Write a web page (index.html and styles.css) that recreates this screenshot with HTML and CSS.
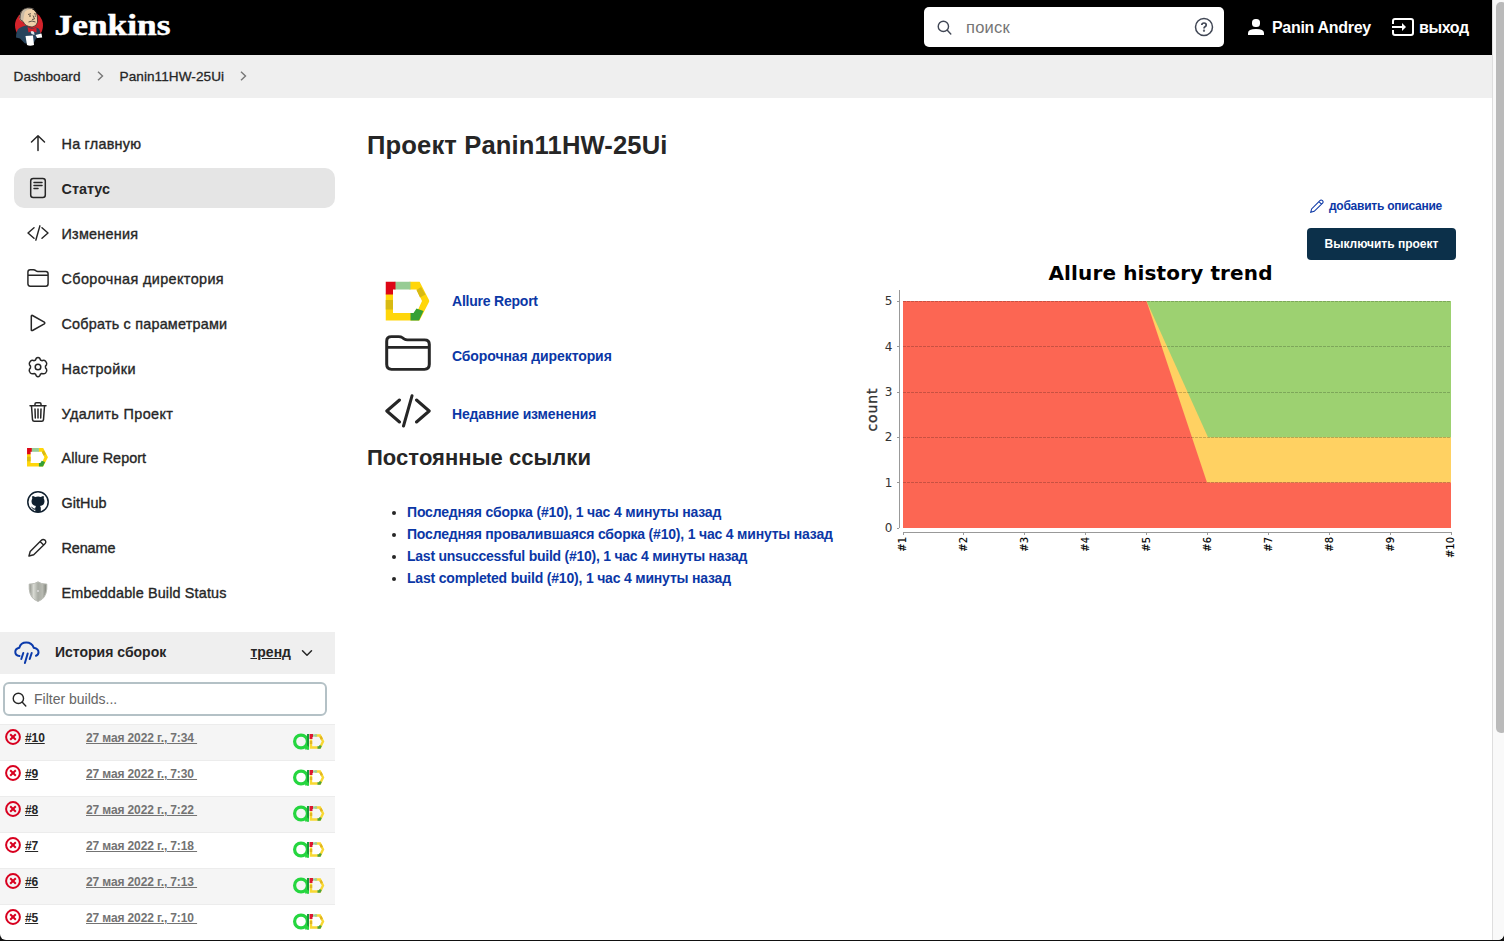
FILE: index.html
```
<!DOCTYPE html>
<html lang="ru">
<head>
<meta charset="utf-8">
<title>Panin11HW-25Ui [Jenkins]</title>
<link rel="stylesheet" href="styles.css">
</head>
<body>
<svg class="defs" width="0" height="0">
  <defs>
    <linearGradient id="shieldfill" x1="0" x2="1"><stop offset="0" stop-color="#8d9088"/><stop offset=".25" stop-color="#d8dad3"/><stop offset=".5" stop-color="#a9aca4"/><stop offset=".75" stop-color="#b8bab2"/><stop offset="1" stop-color="#7c7f77"/></linearGradient>
    <symbol id="i-search" viewBox="0 0 16 16"><path d="M11 11l3.7 3.9" /><circle cx="6.8" cy="6.8" r="5.5"/></symbol>
    <symbol id="i-folder" viewBox="0 0 46 38"><path d="M1.7 31V6.5Q1.7 1.7 6.500 1.7h7q2.500 0 4 1.200l1.500 1.200q1.500 1 3.500 1h17q4.800 0 4.800 4.800V31q0 5.300-4.800 5.300h-33Q1.700 36.300 1.700 31zM1.700 13h42.600"/></symbol>
    <symbol id="i-code" viewBox="0 0 46 34"><path d="M14.500 6L1.800 17l12.700 11M31.500 6l12.700 11-12.700 11M27 1.800L18.500 32"/></symbol>
    <symbol id="i-pencil" viewBox="0 0 20 20"><path d="M1 19l1.300-4.800L13.800 2.600q2-2 4-.4 2 2-.2 4.100L6 17.600zM12.700 3.800l3.700 3.600"/></symbol>
    <symbol id="i-allure" viewBox="0 0 44 40"><path fill="#ffd60a" d="M24 0h10l10 19.500L34 39H0V12h7.500v19.500H31l5.500-12L31 8h-7z"/><path fill="#97cc94" d="M9 0h16v8H9z"/><path fill="#dd0716" d="M0 0h10v8H7.500v5H0z"/><path fill="#d8ba13" d="M0 18.500h7.500V28H0zM31 8.500l4.500-3 4.500 7.500-5.500 3z"/><path fill="#35a035" d="M25 31.500h3l3-4.500 7 2.500-4.500 9.500H25z"/></symbol>
    <symbol id="i-fail" viewBox="0 0 16 16"><circle cx="8" cy="8" r="6.900"/><path d="M5.200 5.200l5.600 5.600M10.800 5.200l-5.600 5.600"/></symbol>
    <symbol id="i-report" viewBox="0 0 32 17"><circle cx="8" cy="8.500" r="6.400" fill="none" stroke="#25d63f" stroke-width="3.200"/><path fill="#159b39" d="M14 1h2v15.500h-2z"/><path fill="#25d63f" d="M12.500 11l3.500 3v2.500h-4z"/><g fill="none" stroke-width="2.400"><path stroke="#f8d832" d="M22 2.500h5l3 6-3 6h-9v-8"/><path stroke="#9ccf9b" d="M20 2.500h4"/><path stroke="#dd1730" stroke-width="3" d="M16.500 2.500h3.500M18 3v3"/><path stroke="#e2b520" d="M18 8v3M27.500 3.500l1.300 2.700"/><path stroke="#48a33d" d="M24.500 14.500h2.200l1-2"/></g></symbol>
  </defs>
</svg>
<div class="window">
<div class="page">
  <header class="header">
    <a class="brand">
      <svg width="30" height="40" viewBox="0 0 30 40" aria-hidden="true">
        <ellipse cx="15" cy="18.500" rx="14" ry="14.500" fill="#d3232b"/>
        <path fill="#28445c" d="M5.500 21q3-2 6.500-2.500l6 3 4-1q3.500.5 4 4l1.500 5-5.500 2-2 4-9 1-5-5-4-1q0-7.500 3.500-9.500z"/>
        <path fill="#efd1aa" d="M6.500 8Q7 1.500 14 1.200q8 .3 9.200 8l.3 6q-1 4-5.500 4.700-7-.5-9-5.500Q5.500 13.500 5.500 11.500z"/>
        <path fill="#c9bba5" d="M5.700 12Q5 3 12 1q5-1 8 1-7.500-.500-9.500 3.500L9.500 12l-1 3z"/>
        <path fill="none" stroke="#231f20" stroke-width=".7" d="M6 11Q6 2 13.500.900 23 .8 23.300 9l.3 6q-1 4.500-5.500 5-7-.5-9-5.500-3.500-1.500-3.500-4M14 7.500l3-.800M20 6.700l2 .5M19 8.500l1.500 3.500-2.500.5M14.500 15q3.500-2 7 0"/>
        <circle cx="16" cy="9" r=".7"/><circle cx="21.300" cy="9" r=".6"/>
        <path fill="#dfe5ea" d="M16 23l4 1.500.500 3.500-3-1z"/>
        <path fill="#fff" d="M11.500 29l7.500-.5 1 9.500q-4 1.500-7 0zM21.500 28l6-1.500.7 4-5 .5z"/>
        <path fill="#d3202b" d="M13.500 20l4.500 2 4.500-1.500v5l-4.500-1.500-3.500 1.500z"/>
      </svg>
      <svg class="wordmark" width="118" height="32" viewBox="0 0 118 32"><text x=".5" y="24" textLength="116" lengthAdjust="spacingAndGlyphs">Jenkins</text></svg>
    </a>
    <div class="search">
      <svg class="line" width="15" height="15"><use href="#i-search"/></svg>
      <span class="search-text">поиск</span>
      <svg width="20" height="20" viewBox="0 0 20 20" fill="none" stroke="#414755" stroke-width="1.500"><circle cx="10" cy="10" r="8.500"/><path stroke-width="1.700" d="M7.800 8q.1-2 2.200-2 2.200 0 2.200 1.900 0 1.100-1.200 1.800-1 .6-1 1.700"/><circle cx="10" cy="13.700" r=".4"/></svg>
    </div>
    <a class="user"><svg width="16" height="16" viewBox="0 0 16 16" fill="#fff"><rect x="4" y="0" width="8" height="8" rx="3.500"/><path d="M0 16v-2q0-4 8-4t8 4v2z"/></svg><span>Panin Andrey</span></a>
    <a class="logout"><svg width="22" height="18" viewBox="0 0 22 18" fill="none" stroke="#fff" stroke-width="2"><path d="M1 6V3q0-2 2-2h16q2 0 2 2v12q0 2-2 2H3q-2 0-2-2v-3M0 9h12"/><path d="M10 5l4 4-4 4z" fill="#fff" stroke="none"/></svg><span>выход</span></a>
  </header>
  <nav class="crumbs">
    <span class="crumb">Dashboard</span>
    <svg width="7" height="10" viewBox="0 0 7 10"><path d="M1 .800L5.500 5 1 9.200"/></svg>
    <span class="crumb">Panin11HW-25Ui</span>
    <svg width="7" height="10" viewBox="0 0 7 10"><path d="M1 .800L5.500 5 1 9.200"/></svg>
  </nav>
  <div class="columns">
    <aside class="side">
      <div class="tasks">
        <a class="task"><svg class="line" width="24" height="24" viewBox="0 0 24 24"><path d="M12 19.500V5M5.500 11L12 4.800l6.500 6.200"/></svg><span class="t1">На главную</span></a>
        <a class="task active"><svg class="line" width="24" height="24" viewBox="0 0 24 24"><rect x="4.700" y="2.500" width="14.600" height="19" rx="2.500"/><path d="M8 6.500h8M8 9.500h8M8 12.500h4"/></svg><span class="t2">Статус</span></a>
        <a class="task"><svg class="line thick" width="22" height="16"><use href="#i-code"/></svg><span class="t3">Изменения</span></a>
        <a class="task"><svg class="line thick" width="22" height="18"><use href="#i-folder"/></svg><span class="t4">Сборочная директория</span></a>
        <a class="task"><svg class="line" width="24" height="24" viewBox="0 0 24 24"><path d="M5.300 19V5q.2-1 1.200-.5l11.800 6.700q1 .8 0 1.600L6.500 19.500q-1 .4-1.200-.5z"/></svg><span class="t5">Собрать с параметрами</span></a>
        <a class="task"><svg class="line" width="24" height="24" viewBox="0 0 24 24"><path d="M12 2.500q2 0 2.400 2.500l1.400.7q2.300-1 3.800.5 1.800 2 .9 3.700-1.400 1.200-1 2.100-.4 1 1 2.100 1 2-.9 3.900-1.500 1.400-3.800.5l-1.400.7Q14 21.700 12 21.700T9.600 19.200l-1.400-.7q-2.300.9-3.800-.5-1.900-1.900-.9-3.900 1.400-1.100 1-2.100.4-.9-1-2.100-.9-1.700.9-3.700 1.500-1.500 3.800-.5l1.400-.7Q10 2.500 12 2.500z"/><circle cx="12" cy="12" r="2.800"/></svg><span class="t6">Настройки</span></a>
        <a class="task"><svg class="line" width="24" height="24" viewBox="0 0 24 24"><path d="M4 5.700h16M9 5.500V4q0-1.300 1.300-1.300h3.400Q15 2.700 15 4v1.500M5.500 6l1 13.700q.2 1.600 1.700 1.600h7.600q1.500 0 1.700-1.600l1-13.700M9 9l.3 9M12 9v9M15 9l-.3 9"/></svg><span class="t7">Удалить Проект</span></a>
        <a class="task"><svg width="21" height="19"><use href="#i-allure"/></svg><span class="t8">Allure Report</span></a>
        <a class="task"><svg width="24" height="24" viewBox="0 0 24 24"><circle cx="12" cy="12" r="10.200" fill="#fff" stroke="#10202f" stroke-width="1.500"/><path fill="#10202f" d="M6.400 6q1.500 0 2.700.900 3-.6 5.800 0Q16.200 6 17.600 6q.5 1.300.1 2.500.9 1.200.8 3-.2 4-4.500 4.500.8.8.8 2v4H9.300v-2.500q-2.300.6-3.200-1.500l-1.300-1.200q1.200-.2 2 1 .9 1 2.500.5 0-1.500.7-2.300-4.400-.6-4.500-4.500 0-1.700.8-3Q5.900 7.300 6.400 6z"/></svg><span class="t9">GitHub</span></a>
        <a class="task"><svg class="line" width="19" height="19"><use href="#i-pencil"/></svg><span class="t10">Rename</span></a>
        <a class="task"><svg width="20" height="21" viewBox="0 0 20 21"><path fill="url(#shieldfill)" stroke="#b9bbb4" d="M10 .8q3 2.300 8.800 2.300Q19.500 14 14 18.300L10 20.500l-4-2.200Q.5 14 1.200 3.100 7 3.100 10 .8z"/><circle cx="10" cy="10" r="1" fill="#ddd"/></svg><span class="t11">Embeddable Build Status</span></a>
      </div>
      <section class="builds">
        <div class="builds-head">
          <svg width="26" height="24" viewBox="0 0 26 24" fill="none" stroke="#0b3aab" stroke-width="2" stroke-linecap="round"><path d="M5.500 15Q1.300 14.500 1.300 11q0-3.500 4-4.300Q6.800 1.500 12.300 1.500q5.500 0 7.500 5.300 4.700 1 4.700 4.500 0 2.500-2.500 3.500"/><path d="M9.300 12l-2 6M13.700 12.500l-2.800 9.500M17.700 12l-2 6"/></svg>
          <b class="builds-title">История сборок</b>
          <a class="trend">тренд</a>
          <svg class="line chev" width="12" height="8" viewBox="0 0 12 8"><path d="M1.500 1.800l4.500 4.500 4.500-4.500"/></svg>
        </div>
        <div class="filter"><svg class="line" width="15" height="15"><use href="#i-search"/></svg><span>Filter builds...</span></div>
        <div class="rows">
          <div class="row"><svg class="fail"><use href="#i-fail"/></svg><a class="num">#10</a><a class="date">27 мая 2022 г., 7:34&nbsp;</a><svg class="rep"><use href="#i-report"/></svg></div>
          <div class="row"><svg class="fail"><use href="#i-fail"/></svg><a class="num">#9</a><a class="date">27 мая 2022 г., 7:30&nbsp;</a><svg class="rep"><use href="#i-report"/></svg></div>
          <div class="row"><svg class="fail"><use href="#i-fail"/></svg><a class="num">#8</a><a class="date">27 мая 2022 г., 7:22&nbsp;</a><svg class="rep"><use href="#i-report"/></svg></div>
          <div class="row"><svg class="fail"><use href="#i-fail"/></svg><a class="num">#7</a><a class="date">27 мая 2022 г., 7:18&nbsp;</a><svg class="rep"><use href="#i-report"/></svg></div>
          <div class="row"><svg class="fail"><use href="#i-fail"/></svg><a class="num">#6</a><a class="date">27 мая 2022 г., 7:13&nbsp;</a><svg class="rep"><use href="#i-report"/></svg></div>
          <div class="row"><svg class="fail"><use href="#i-fail"/></svg><a class="num">#5</a><a class="date">27 мая 2022 г., 7:10&nbsp;</a><svg class="rep"><use href="#i-report"/></svg></div>
        </div>
      </section>
    </aside>
    <main class="main">
      <div class="content">
        <h1>Проект Panin11HW-25Ui</h1>
        <div class="links">
          <a class="biglink"><svg width="45" height="41" viewBox="0 0 45 41"><use href="#i-allure" x=".5" y=".5" width="44" height="40"/></svg><span class="l1">Allure Report</span></a>
          <a class="biglink folder"><svg class="line big" width="46" height="36" viewBox="0 0 46 38" preserveAspectRatio="none"><use href="#i-folder" width="46" height="38"/></svg><span class="l2">Сборочная директория</span></a>
          <a class="biglink code"><svg class="line big" width="46" height="34"><use href="#i-code"/></svg><span class="l3">Недавние изменения</span></a>
        </div>
        <h2>Постоянные ссылки</h2>
        <ul class="permalinks">
          <li><a class="p1">Последняя сборка (#10), 1 час 4 минуты назад</a></li>
          <li><a class="p2">Последняя провалившаяся сборка (#10), 1 час 4 минуты назад</a></li>
          <li><a class="p3">Last unsuccessful build (#10), 1 час 4 минуты назад</a></li>
          <li><a class="p4">Last completed build (#10), 1 час 4 минуты назад</a></li>
        </ul>
      </div>
      <div class="right">
        <a class="describe"><svg width="14" height="14"><use href="#i-pencil"/></svg><span>добавить описание</span></a>
        <button class="disable" type="button">Выключить проект</button>
        <svg class="chart" width="596" height="310" viewBox="860 260 596 310">
          <text class="ctitle" x="1048.500" y="280" textLength="224">Allure history trend</text>
          <path fill="#fc6653" d="M903 301h548v227H903z"/>
          <path fill="#ffd162" d="M1146.500 301L1207 482.500h244V301z"/>
          <path fill="#9dd171" d="M1146.500 301l61.500 136.300h243V301z"/>
          <path class="grid" d="M903 301.500h548M903 346.500h548M903 392.500h548M903 437.500h548M903 482.500h548"/>
          <path class="axis" d="M899.500 290v238M897 301.500h2M897 346.500h2M897 392.500h2M897 437.500h2M897 482.500h2M897 528.500h2M903 532.500h548M903.500 532v3M963.500 532v3M1024.500 532v3M1085.500 532v3M1146.500 532v3M1207.500 532v3M1268.500 532v3M1329.500 532v3M1390.500 532v3M1451.500 532v3"/>
          <g class="ylab"><text x="892.500" y="305">5</text><text x="892.500" y="351">4</text><text x="892.500" y="396">3</text><text x="892.500" y="441">2</text><text x="892.500" y="487">1</text><text x="892.500" y="532">0</text></g>
          <text class="count" transform="translate(877 431.500) rotate(-90)" textLength="43">count</text>
          <g class="xlab">
            <text transform="translate(906 537) rotate(-90)">#1</text><text transform="translate(967 537) rotate(-90)">#2</text><text transform="translate(1028 537) rotate(-90)">#3</text><text transform="translate(1089 537) rotate(-90)">#4</text><text transform="translate(1150 537) rotate(-90)">#5</text><text transform="translate(1211 537) rotate(-90)">#6</text><text transform="translate(1272 537) rotate(-90)">#7</text><text transform="translate(1333 537) rotate(-90)">#8</text><text transform="translate(1394 537) rotate(-90)">#9</text><text transform="translate(1454 537) rotate(-90)">#10</text>
          </g>
        </svg>
      </div>
    </main>
  </div>
</div>
<div class="scrollbar"><div class="thumb"></div></div>
</div>
</body>
</html>
```
FILE: styles.css
```
* { box-sizing: border-box; }
body { margin: 0; background: #111; color: #262626; font-family: "Liberation Sans", Arial, sans-serif; font-size: 14px; overflow: hidden; }
.defs { display: block; height: 0; }
.window { display: flex; width: 1504px; height: 940px; background: #fff; border-radius: 0 0 6px 6px; overflow: hidden; }
.page { width: 1492px; flex: none; display: flex; flex-direction: column; }
.scrollbar { width: 12px; background: #f9f9f9; border-left: 1px solid #dedede; padding: 2px 0 0 3px; overflow: hidden; }
.thumb { width: 11px; height: 731px; border-radius: 5px; background: #bababa; }
svg { flex: none; display: block; overflow: visible; }
span, a, b, li { white-space: nowrap; }
.line { fill: none; stroke: #262626; stroke-width: 1.5; stroke-linecap: round; stroke-linejoin: round; }
.line.thick { stroke-width: 3.1; }
.line.big { stroke-width: 3; }

.header { height: 55px; flex: none; background: #000; color: #fff; display: flex; align-items: center; padding: 0 0 1px 14px; }
.brand { display: flex; align-items: center; gap: 10px; margin-right: auto; }
.wordmark text { font: bold 30px "Liberation Serif", serif; fill: #fff; stroke: #fff; stroke-width: .5; }
.search { width: 300px; height: 40px; background: #fff; border-radius: 5px; display: flex; align-items: center; padding: 0 10px 0 13px; color: #757575; font-size: 16.5px; margin-right: 24px; }
.search .line { stroke: #414755; }
.search-text { margin: 1px auto 0 14px; letter-spacing: .2px; }
.user, .logout { display: flex; align-items: center; font-size: 16px; font-weight: bold; }
.user { gap: 8px; width: 144px; letter-spacing: -.3px; }
.logout { gap: 5px; width: 100px; letter-spacing: -.4px; }
.user span, .logout span { padding-top: 2px; }

.crumbs { height: 43px; flex: none; background: #efefef; display: flex; align-items: center; gap: 16px; padding: 0 0 1px 13.5px; font-size: 13.6px; -webkit-text-stroke: .3px #262626; }
.crumb { letter-spacing: .06px; }
.crumbs svg { fill: none; stroke: #777; stroke-width: 1.4; }

.columns { display: flex; flex: 1; min-height: 0; }
.side { width: 335px; flex: none; }
.tasks { height: 534px; padding: 25px 0 0 14px; display: flex; flex-direction: column; gap: 4.9px; }
.task { height: 40px; flex: none; border-radius: 10px; display: grid; grid-template-columns: 47.5px 1fr; align-items: center; font-size: 14.4px; -webkit-text-stroke: .35px #262626; }
.task span { padding-top: 2.4px; }
.task svg { justify-self: center; }
.task.active { background: #e5e5e5; font-weight: bold; -webkit-text-stroke: 0; }
.t1, .t3 { letter-spacing: .24px; }
.t4, .t7 { letter-spacing: .39px; }
.t5 { letter-spacing: .21px; }
.t6 { letter-spacing: .43px; }
.t8, .t9 { letter-spacing: .05px; }
.t10 { letter-spacing: -.1px; }
.t11 { letter-spacing: .15px; }

.builds-head { height: 42px; background: #efefef; display: flex; align-items: center; padding: 0 22px 1px 14px; }
.builds-title { font-size: 14px; margin: 0 auto 0 15px; padding-bottom: 1px; }
.trend { font-size: 14px; font-weight: bold; text-decoration: underline; margin-right: 10px; padding-bottom: 1px; }
.filter { margin: 8px 8px 8px 3px; height: 34px; border: 2px solid #b4c1c6; border-radius: 6px; display: flex; align-items: center; gap: 7px; padding-left: 7px; font-size: 14px; color: #666; }
.row { height: 36px; border-top: 1px solid #ececec; display: grid; grid-template-columns: 20px 61px 1fr 32px; padding: 4px 10px 0 5px; font-size: 12px; font-weight: bold; }
.row:nth-child(odd) { background: #f5f5f5; }
.row a { text-decoration: underline; line-height: 18px; justify-self: start; }
.num { letter-spacing: -.1px; }
.fail { width: 16px; height: 16px; fill: none; stroke: #d8001f; stroke-width: 2; }
.date { color: #737373; letter-spacing: -.12px; }
.rep { width: 32px; height: 17px; margin-top: 3.5px; }

.main { flex: 1; display: flex; padding: 0 36px 0 32px; }
.content { width: 493px; flex: none; padding-top: 31px; }
h1 { margin: 0; font-size: 25.6px; line-height: 32px; letter-spacing: .13px; white-space: nowrap; }
.links { padding: 117px 0 0 18px; }
.biglink { display: flex; align-items: center; gap: 21px; height: 46px; color: #0b37a6; font-weight: bold; }
.biglink:first-child { gap: 22px; }
.biglink.folder { height: 58px; }
.biglink.folder span, .biglink.code span { padding-top: 6px; }
.biglink.code { height: 58px; }
.l1 { letter-spacing: -.22px; }
.l2 { letter-spacing: -.1px; }
.l3 { letter-spacing: -.14px; }
h2 { margin: 4px 0 0; font-size: 22px; line-height: 28px; letter-spacing: .05px; white-space: nowrap; }
.permalinks { margin: 29px 0 0; padding-left: 40px; line-height: 22px; font-size: 14px; font-weight: bold; }
.permalinks a { color: #0b37a6; }
.p1 { letter-spacing: -.17px; }
.p2 { letter-spacing: -.195px; }
.p3 { letter-spacing: -.245px; }
.p4 { letter-spacing: -.195px; }

.right { display: flex; flex-direction: column; align-items: flex-end; flex: 1; padding-top: 98px; }
.describe { display: flex; align-items: center; gap: 5px; height: 20px; color: #0b37a6; font-size: 12px; font-weight: bold; letter-spacing: -.24px; margin-right: 14px; }
.describe svg { fill: none; stroke: #0b37a6; stroke-width: 1.5; }
.disable { margin: 12px 0 0; width: 149px; height: 32px; flex: none; padding: 0; border: 0; border-radius: 4px; background: #0c304a; color: #fff; font: bold 12px "Liberation Sans", Arial, sans-serif; white-space: nowrap; }
.chart text { font-family: "DejaVu Sans", sans-serif; }
.chart .ctitle { font-size: 20px; font-weight: bold; fill: #000; }
.grid { stroke: #000; stroke-opacity: .2; stroke-dasharray: 3 1; }
.axis { stroke: #999; fill: none; }
.ylab text { font-size: 12px; text-anchor: end; fill: #333; }
.chart .count { font-size: 14px; fill: #333; stroke: #333; stroke-width: .35; }
.xlab text { font-size: 10px; text-anchor: end; fill: #000; stroke: #000; stroke-width: .15; }
```
